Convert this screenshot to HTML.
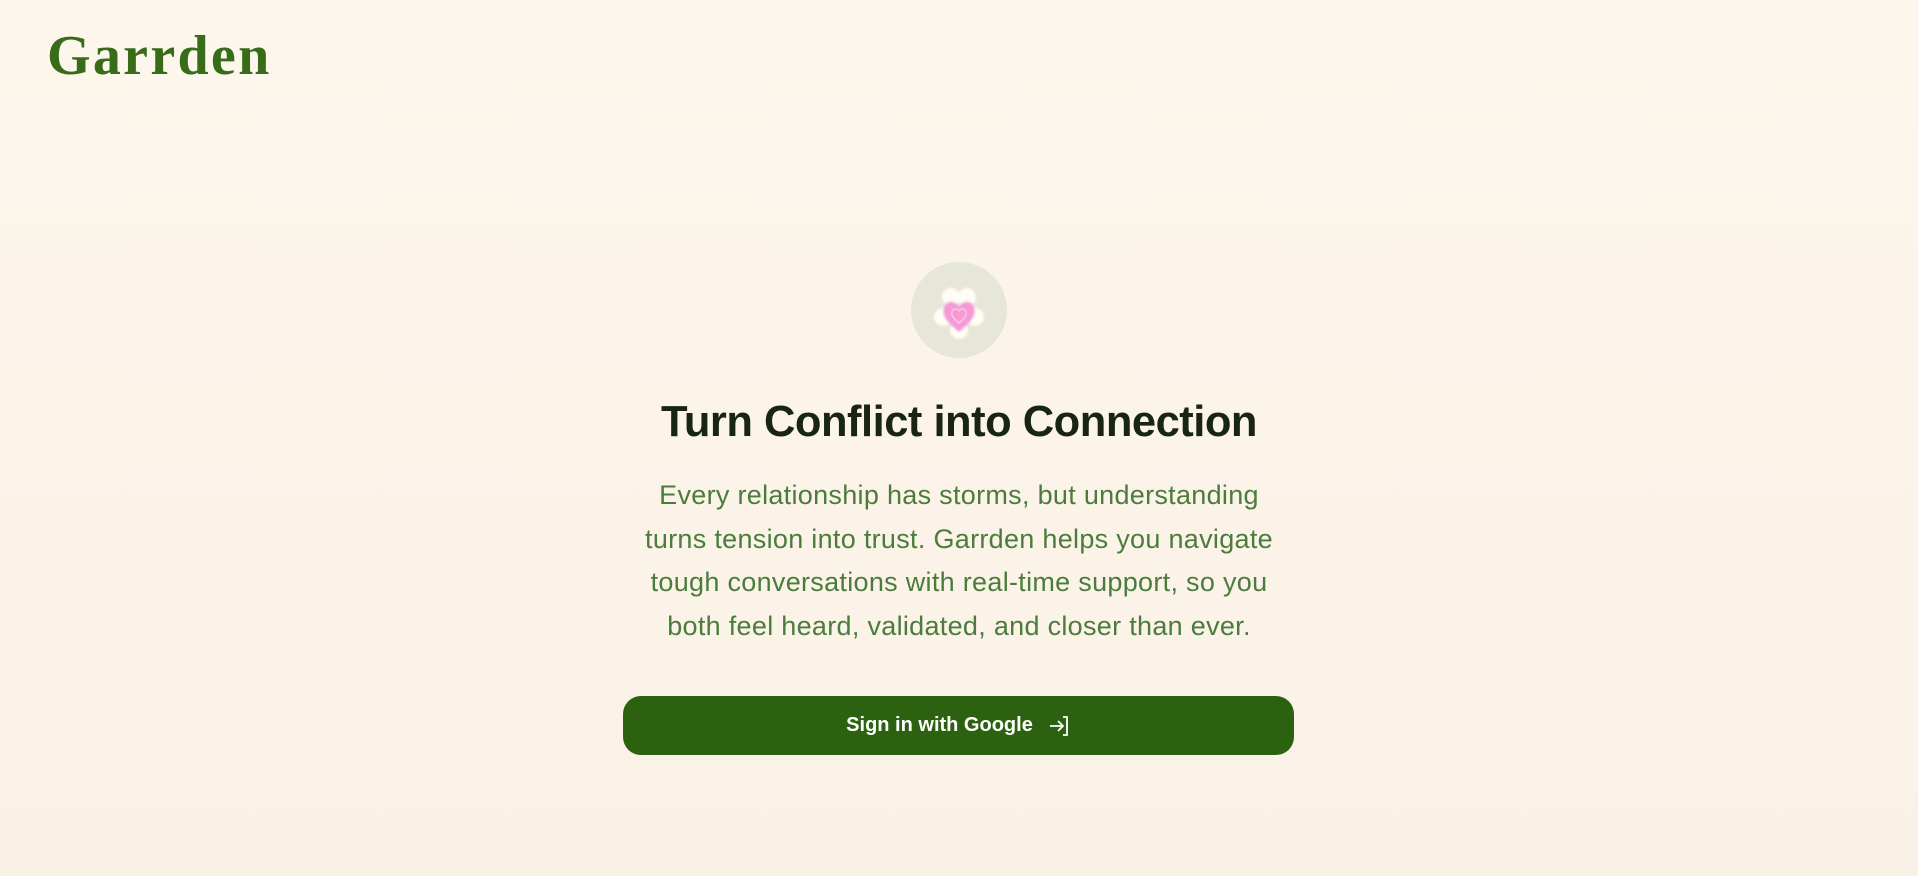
<!DOCTYPE html>
<html><head><meta charset="utf-8"><style>
html,body{margin:0;padding:0;}
body{width:1918px;height:876px;overflow:hidden;background:linear-gradient(180deg,#fdf6ec 0%,#faf1e6 100%);font-family:"Liberation Sans",sans-serif;position:relative;}
.logo{position:absolute;left:47px;top:24px;font-family:"Liberation Serif",serif;font-size:56px;font-weight:bold;color:#386c18;letter-spacing:2.3px;}
.circle{position:absolute;left:911px;top:262px;width:96px;height:96px;border-radius:50%;background:#e6e7d8;}
h1{position:absolute;left:0;width:1918px;top:398px;margin:0;text-align:center;font-size:43.5px;font-weight:bold;color:#18250f;letter-spacing:-0.5px;}
p{position:absolute;left:629px;width:660px;top:474px;margin:0;text-align:center;font-size:27px;letter-spacing:0.3px;line-height:43.5px;color:#4b7c3c;}
.btn{position:absolute;left:623px;top:696px;width:671px;height:59px;border-radius:18px;background:#2c620f;color:#fff;font-size:20px;font-weight:bold;display:flex;align-items:center;justify-content:center;}
</style></head><body>
<div class="logo">Garrden</div>
<div class="circle">
<svg width="96" height="96" viewBox="0 0 96 96">
<defs><filter id="b"><feGaussianBlur stdDeviation="1"/></filter></defs>
<g fill="#fffdf5" filter="url(#b)">
<circle cx="40" cy="35" r="9"/><circle cx="56" cy="35" r="9"/><circle cx="32" cy="55" r="9"/><circle cx="64" cy="55" r="9"/><circle cx="48" cy="68" r="9"/>
</g>
<path d="M48 70 C36 60 31 54 33 46 C35 38 44 38 48 45 C52 38 61 38 63 46 C65 54 60 60 48 70Z" fill="#f59ad6" filter="url(#b)"/>
<path d="M48 61 C42 56 40 53 41 50 C42 46 46 46 48 49 C50 46 54 46 55 50 C56 53 54 56 48 61Z" fill="none" stroke="#fbc4e8" stroke-width="1.5"/>
</svg>
</div>
<h1>Turn Conflict into Connection</h1>
<p>Every relationship has storms, but understanding turns tension into trust. Garrden helps you navigate tough conversations with real-time support, so you both feel heard, validated, and closer than ever.</p>
<div class="btn">Sign in with Google
<svg style="margin-left:14px" width="24" height="24" viewBox="0 0 24 24" fill="none" stroke="#fff" stroke-width="1.8"><path d="M3 12h13M11 7l5 5-5 5M16 3h4v18h-4"/></svg>
</div>
</body></html>
